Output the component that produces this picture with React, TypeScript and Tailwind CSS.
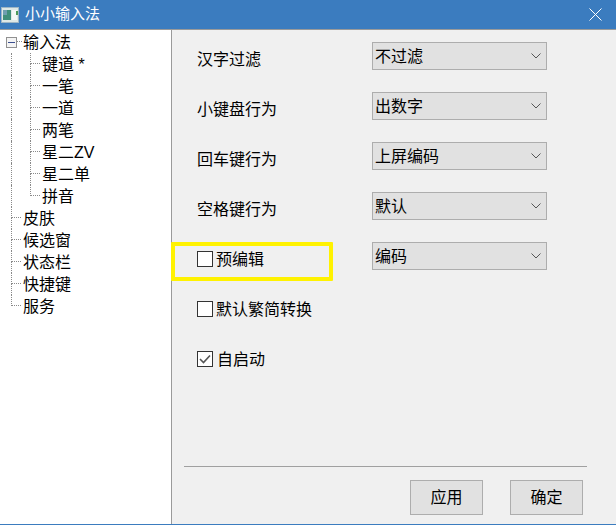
const FONT = "font-['Liberation_Sans','Noto_Sans_CJK_SC',sans-serif]";

const dotted = "border-[#8a8a8a] border-dotted";

// one tree guide cell: an elbow, or a plain line passing through
const Guide = ({ w, kind }: { w: string; kind: "pass" | "tee" | "end" | "none" }) => {
    if (kind === "none") return <span className={`${w} shrink-0`} />;
    if (kind === "pass") return <span className={`${w} h-full shrink-0 border-l ${dotted}`} />;
    return (
        <span className={`${w} flex h-full shrink-0 flex-col`}>
            <span className={`h-[11px] w-[10px] border-b border-l ${dotted}`} />
            <span className={`flex-1 ${kind === "tee" ? `border-l ${dotted}` : ""}`} />
        </span>
    );
};

const Tree = () => {
    const children = ["键道 *", "一笔", "一道", "两笔", "星二ZV", "星二单", "拼音"];
    const roots = ["皮肤", "候选窗", "状态栏", "快捷键", "服务"];
    return (
        <div className="h-full w-[172px] shrink-0 border-r border-[#9a9a9a] bg-white pl-[11px] pt-[1px] text-[16px] text-black">
            <div className="relative flex h-[22px] items-center">
                <span className="absolute left-[-5px] top-[6px] flex h-[11px] w-[11px] items-center justify-center border border-[#919191] bg-[#f4f4f4]">
                    <span className="h-px w-[7px] bg-[#3b4f8f]" />
                </span>
                <span className="ml-[6px] mt-[-1px] w-[5px] border-b border-dotted border-[#8a8a8a]" />
                <span className="ml-px pt-px">输入法</span>
            </div>
            {children.map((label, i) => (
                <div key={label} className="flex h-[22px] items-center">
                    <Guide w="w-[19px]" kind="pass" />
                    <Guide w="w-[12px]" kind={i === children.length - 1 ? "end" : "tee"} />
                    <span className="pt-px">{label}</span>
                </div>
            ))}
            {roots.map((label, i) => (
                <div key={label} className="flex h-[22px] items-center">
                    <Guide w="w-[12px]" kind={i === roots.length - 1 ? "end" : "tee"} />
                    <span className="pt-px">{label}</span>
                </div>
            ))}
        </div>
    );
};

const Select = ({ value }: { value: string }) => (
    <div className="flex h-[28px] w-[175px] items-center justify-between border border-[#adadad] bg-[#e1e1e1] pl-[2px] pr-[5px] text-[16px] text-black">
        <span className="pt-px">{value}</span>
        <svg width="10" height="6" viewBox="0 0 10 6" fill="none" stroke="#555" strokeWidth="1">
            <path d="M0.5 0.5L5 5L9.5 0.5" />
        </svg>
    </div>
);

const Check = ({ label, checked }: { label: string; checked?: boolean }) => (
    <div className="mt-[6px] flex h-[22px] items-center gap-[3px] text-[16px] text-black">
        <span className="flex h-[16px] w-[16px] shrink-0 items-center justify-center border border-[#333] bg-white">
            {checked ? (
                <svg width="12" height="10" viewBox="0 0 12 10" fill="none" stroke="#555" strokeWidth="1.6">
                    <path d="M1 5L4.5 8.5L11 1.5" />
                </svg>
            ) : null}
        </span>
        <span className={checked ? "ml-px pt-[2px]" : "pt-[2px]"}>{label}</span>
    </div>
);

const Button = ({ label }: { label: string }) => (
    <div className="flex h-[35px] w-[73px] items-center justify-center border border-[#adadad] bg-[#e1e1e1] text-[16px] text-black">
        {label}
    </div>
);

const Row = ({ children, select }: { children: React.ReactNode; select?: string }) => (
    <div className="flex h-[50px] items-start">
        <div className="relative w-[175px]">{children}</div>
        {select ? <Select value={select} /> : null}
    </div>
);

const Label = ({ text }: { text: string }) => (
    <div className="mt-[7px] flex h-[22px] items-center text-[16px] text-black">{text}</div>
);

export default function App() {
    return (
        <div className={`flex h-[525px] w-[616px] flex-col overflow-hidden bg-[#f0f0f0] ${FONT}`}>
            <div className="flex h-[29px] shrink-0 items-center justify-between bg-[#3b7cbf] pl-px pr-[14px] text-[15px] text-white">
                <div className="flex items-center gap-[6px]">
                    <svg width="18" height="16" viewBox="0 0 18 16">
                        <rect x="0.5" y="0.5" width="17" height="15" fill="#dfe8e6" stroke="#9fb6c6" />
                        <rect x="2" y="3" width="8" height="10" fill="#3f8f7a" />
                        <rect x="2" y="3" width="4" height="5" fill="#6f9fb0" />
                        <rect x="11" y="3" width="5" height="10" fill="#f4f8f6" />
                        <rect x="15" y="4" width="2" height="4" fill="#4c9a5a" />
                    </svg>
                    <span>小小输入法</span>
                </div>
                <svg width="13" height="13" viewBox="0 0 13 13" fill="none" stroke="#fff" strokeWidth="1">
                    <path d="M0.5 0.5L12.5 12.5M12.5 0.5L0.5 12.5" />
                </svg>
            </div>
            <div className="flex min-h-0 flex-1 border-t border-[#9a9a9a]">
                <Tree />
                <div className="flex min-w-0 flex-1 flex-col pt-[12px]">
                    <div className="pl-[25px]">
                        <Row select="不过滤"><Label text="汉字过滤" /></Row>
                        <Row select="出数字"><Label text="小键盘行为" /></Row>
                        <Row select="上屏编码"><Label text="回车键行为" /></Row>
                        <Row select="默认"><Label text="空格键行为" /></Row>
                        <Row select="编码">
                            <Check label="预编辑" />
                            <span className="absolute left-[-26px] top-0 h-[39px] w-[162px] rounded-[1px] border-4 border-[#fff200]" />
                        </Row>
                        <Row><Check label="默认繁简转换" /></Row>
                        <Row><Check label="自启动" checked /></Row>
                    </div>
                    <div className="mt-auto pb-[9px]">
                        <div className="ml-[12px] h-px w-[403px] bg-[#a0a0a0]" />
                        <div className="mt-[13px] flex justify-end gap-[27px] pr-[33px]">
                            <Button label="应用" />
                            <Button label="确定" />
                        </div>
                    </div>
                </div>
            </div>
            <div className="h-px shrink-0 bg-[#3b7cbf]" />
        </div>
    );
}
